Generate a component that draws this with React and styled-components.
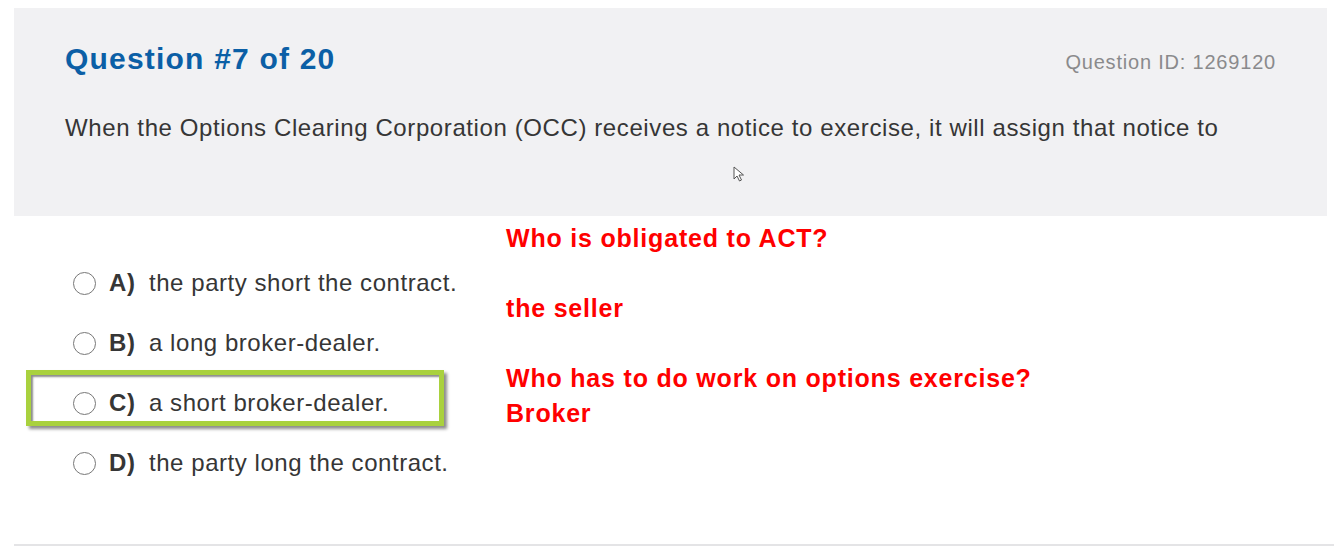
import React from 'react';
import styled, { createGlobalStyle } from 'styled-components';

const GlobalStyle = createGlobalStyle`
    body {
        margin: 0;
        background: #ffffff;
        font-family: "Liberation Sans", Arial, sans-serif;
    }
`;

const options = [
    { letter: 'A)', text: 'the party short the contract.' },
    { letter: 'B)', text: 'a long broker-dealer.' },
    { letter: 'C)', text: 'a short broker-dealer.', marked: true },
    { letter: 'D)', text: 'the party long the contract.' },
];

const notes = [
    ['Who is obligated to ACT?'],
    ['the seller'],
    ['Who has to do work on options exercise?', 'Broker'],
];

const App = () => (
    <Page>
        <GlobalStyle />
        <Card>
            <Prompt>
                <Header>
                    <Title>Question #7 of 20</Title>
                    <QuestionId>Question ID: 1269120</QuestionId>
                </Header>
                <Stem>When the Options Clearing Corporation (OCC) receives a notice to exercise, it will assign that notice to</Stem>
                <Cursor width="12" height="16" viewBox="0 0 12 16">
                    <path d="M1 1 L1 13 L4 10 L6.5 15 L8.5 14 L6 9 L10.5 9 Z" fill="#fff" stroke="#555" strokeWidth="1" strokeLinejoin="round" />
                </Cursor>
            </Prompt>
            <Body>
                <Choices>
                    {options.map(o => (
                        <Choice key={o.letter}>
                            {o.marked && <Highlight />}
                            <Radio />
                            <Letter>{o.letter}</Letter>
                            <ChoiceText>{o.text}</ChoiceText>
                        </Choice>
                    ))}
                </Choices>
                <Notes>
                    {notes.map((lines, i) => (
                        <Note key={i}>
                            {lines.map(l => <div key={l}>{l}</div>)}
                        </Note>
                    ))}
                </Notes>
            </Body>
        </Card>
    </Page>
);

export default App;

const Page = styled.div`
    width: 1334px;
    height: 556px;
    padding: 8px 0 0 14px;
    box-sizing: border-box;
    overflow: hidden;
`;

const Card = styled.div`
    height: 536px;
    border-bottom: 2px solid #e4e4e6;
`;

const Prompt = styled.div`
    position: relative;
    width: 1313px;
    height: 208px;
    background: #f1f1f3;
    padding: 34px 51px 0 51px;
    box-sizing: border-box;
`;

const Header = styled.div`
    display: flex;
    justify-content: space-between;
    align-items: baseline;
`;

const Title = styled.h1`
    margin: 0;
    font-size: 30px;
    font-weight: bold;
    letter-spacing: 1.2px;
    color: #0b5fa6;
    line-height: 34px;
`;

const QuestionId = styled.span`
    font-size: 20px;
    letter-spacing: 0.8px;
    color: #8a8a8c;
`;

const Stem = styled.p`
    margin: 37px 0 0;
    font-size: 24px;
    letter-spacing: 0.6px;
    line-height: 30px;
    color: #363636;
`;

const Cursor = styled.svg`
    position: absolute;
    left: 719px;
    top: 158px;
`;

const Body = styled.div`
    display: flex;
    align-items: flex-start;
`;

const Choices = styled.div`
    width: 441px;
    padding: 37px 0 0 51px;
`;

const Choice = styled.div`
    position: relative;
    display: flex;
    align-items: center;
    height: 60px;
    font-size: 24px;
    letter-spacing: 0.55px;
    color: #363636;
    white-space: nowrap;
`;

const Highlight = styled.div`
    position: absolute;
    left: -39px;
    top: -3px;
    width: 418px;
    height: 56px;
    box-sizing: border-box;
    border: 5px solid #a9d13e;
    box-shadow: 3px 3px 3px rgba(0, 0, 0, 0.45), inset 2px 2px 2px rgba(0, 0, 0, 0.45);
`;

const Radio = styled.span`
    width: 21px;
    height: 21px;
    margin-left: 8px;
    border: 1.5px solid #777;
    border-radius: 50%;
    background: #fff;
    flex-shrink: 0;
`;

const Letter = styled.span`
    margin-left: 13px;
    width: 40px;
    font-weight: bold;
`;

const ChoiceText = styled.span``;

const Notes = styled.div`
    padding-top: 5px;
    font-size: 25px;
    font-weight: bold;
    letter-spacing: 0.8px;
    line-height: 35px;
    color: #ff0000;
`;

const Note = styled.div`
    margin-bottom: 35px;
`;
